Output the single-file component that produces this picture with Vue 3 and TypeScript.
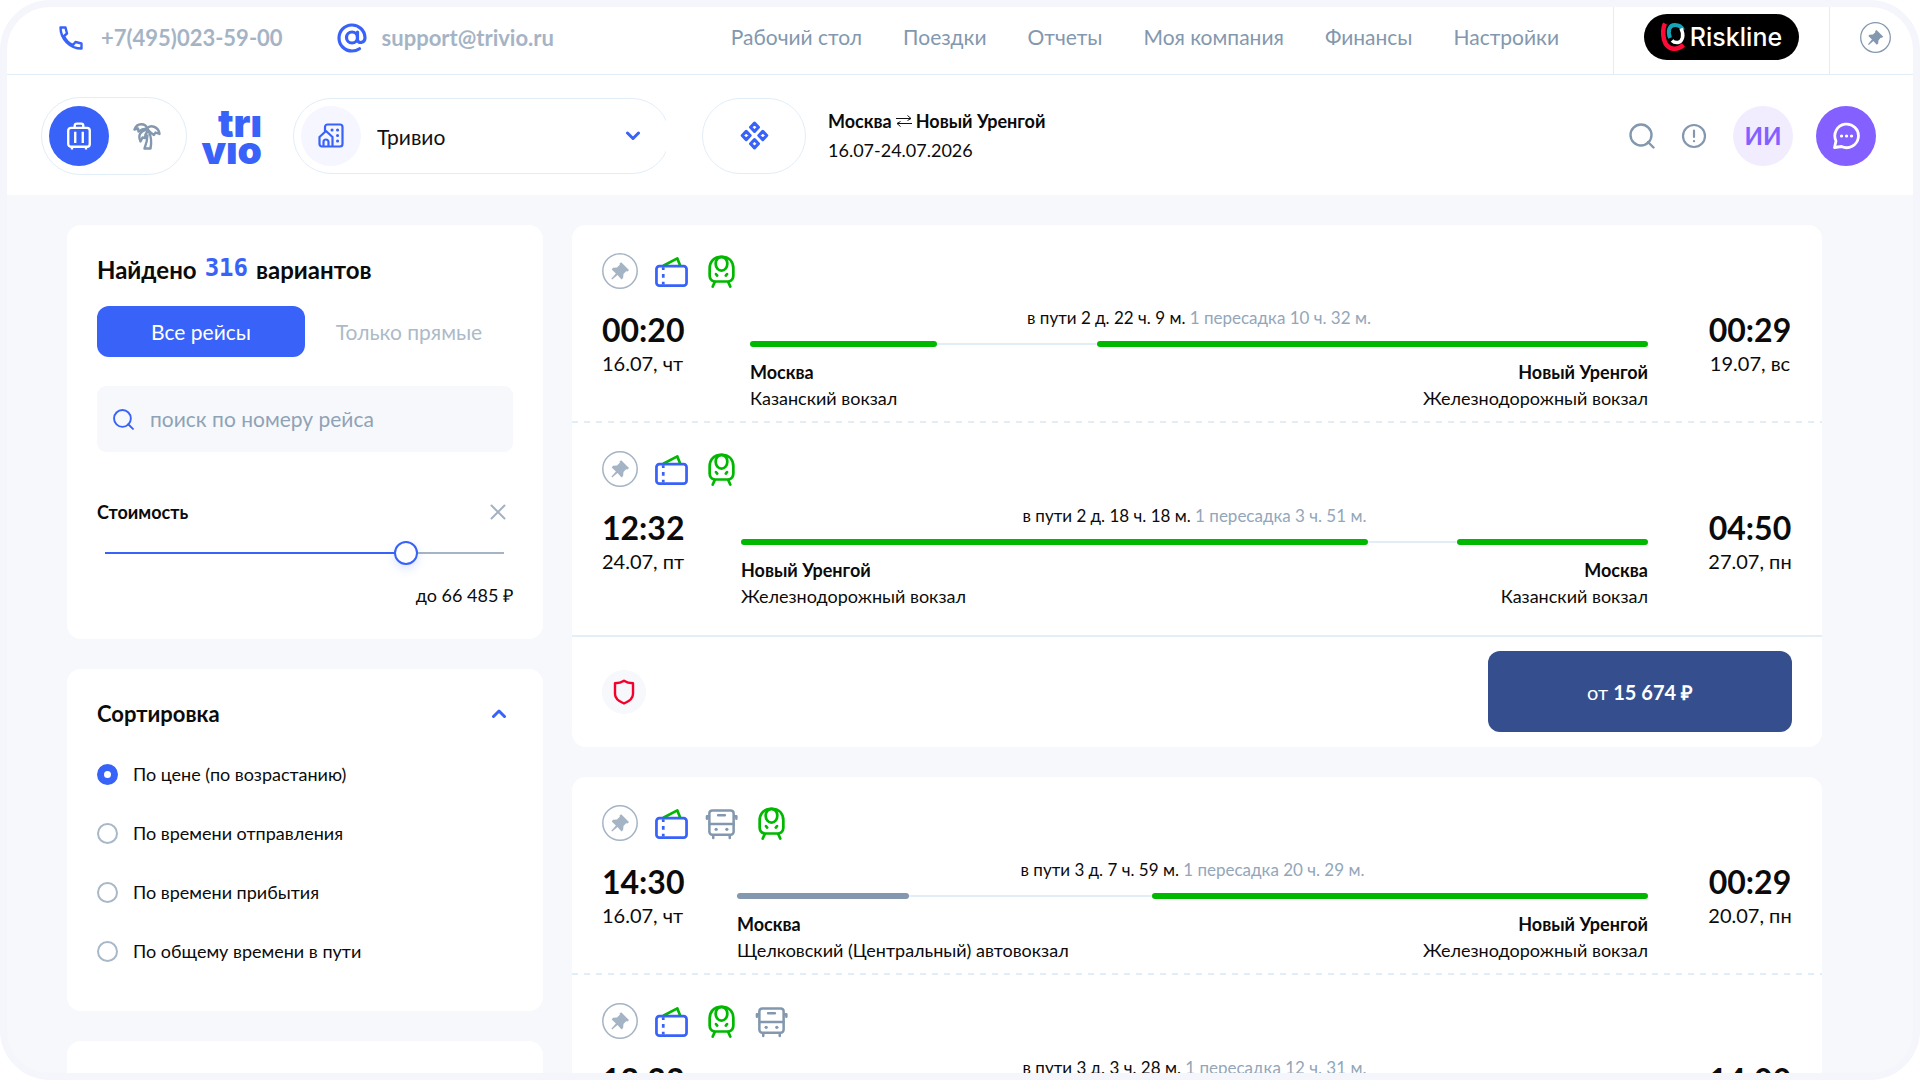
<script setup lang="ts">
import { computed, ref } from 'vue'

type Transport = 'train' | 'bus'

interface Segment {
  kind: Transport | 'wait'
  share: number
}

interface Point {
  time: string
  date: string
  city: string
  station: string
}

interface Leg {
  transports: Transport[]
  startWidth: number
  from: Point
  to: Point
  duration: string
  transfer: string
  segments: Segment[]
}

interface Trip {
  id: number
  legs: Leg[]
  price: string
}

const navItems = ['Рабочий стол', 'Поездки', 'Отчеты', 'Моя компания', 'Финансы', 'Настройки']

const sortOptions = [
  { id: 'price', label: 'По цене (по возрастанию)' },
  { id: 'departure', label: 'По времени отправления' },
  { id: 'arrival', label: 'По времени прибытия' },
  { id: 'total', label: 'По общему времени в пути' },
]
const sortBy = ref('price')

const company = ref('Тривио')
const flightNumber = ref('')
const directOnly = ref(false)

const minPrice = 15674
const maxPrice = 81663
const price = ref(66485)
const priceFill = computed(() => {
  const ratio = (price.value - minPrice) / (maxPrice - minPrice)
  return `${Math.round(3 + ratio * 94)}%`
})
const priceLabel = computed(() => String(price.value).replace(/\B(?=(\d{3})+$)/g, '\u00a0'))

const trips: Trip[] = [
  {
    id: 1,
    price: '15 674 ₽',
    legs: [
      {
        transports: ['train'],
        startWidth: 88,
        from: { time: '00:20', date: '16.07, чт', city: 'Москва', station: 'Казанский вокзал' },
        to: { time: '00:29', date: '19.07, вс', city: 'Новый Уренгой', station: 'Железнодорожный вокзал' },
        duration: 'в пути 2 д. 22 ч. 9 м.',
        transfer: '1 пересадка 10 ч. 32 м.',
        segments: [
          { kind: 'train', share: 187 },
          { kind: 'wait', share: 160 },
          { kind: 'train', share: 551 },
        ],
      },
      {
        transports: ['train'],
        startWidth: 79,
        from: { time: '12:32', date: '24.07, пт', city: 'Новый Уренгой', station: 'Железнодорожный вокзал' },
        to: { time: '04:50', date: '27.07, пн', city: 'Москва', station: 'Казанский вокзал' },
        duration: 'в пути 2 д. 18 ч. 18 м.',
        transfer: '1 пересадка 3 ч. 51 м.',
        segments: [
          { kind: 'train', share: 626 },
          { kind: 'wait', share: 89 },
          { kind: 'train', share: 191 },
        ],
      },
    ],
  },
  {
    id: 2,
    price: '15 698 ₽',
    legs: [
      {
        transports: ['bus', 'train'],
        startWidth: 75,
        from: { time: '14:30', date: '16.07, чт', city: 'Москва', station: 'Щелковский (Центральный) автовокзал' },
        to: { time: '00:29', date: '20.07, пн', city: 'Новый Уренгой', station: 'Железнодорожный вокзал' },
        duration: 'в пути 3 д. 7 ч. 59 м.',
        transfer: '1 пересадка 20 ч. 29 м.',
        segments: [
          { kind: 'bus', share: 172 },
          { kind: 'wait', share: 243 },
          { kind: 'train', share: 496 },
        ],
      },
      {
        transports: ['train', 'bus'],
        startWidth: 79,
        from: { time: '12:32', date: '24.07, пт', city: 'Новый Уренгой', station: 'Железнодорожный вокзал' },
        to: { time: '14:00', date: '27.07, пн', city: 'Москва', station: 'Щелковский (Центральный) автовокзал' },
        duration: 'в пути 3 д. 3 ч. 28 м.',
        transfer: '1 пересадка 12 ч. 31 м.',
        segments: [
          { kind: 'train', share: 560 },
          { kind: 'wait', share: 180 },
          { kind: 'bus', share: 166 },
        ],
      },
    ],
  },
]
</script>

<template>
  <svg class="sprite" aria-hidden="true">
    <symbol id="pin" viewBox="0 0 36 36">
      <circle cx="18" cy="18" r="17.2" fill="none" stroke="currentColor" stroke-width="1.5" />
      <path
        fill="currentColor"
        d="M19.2 9.3 27 17.1l-1.5 1.3-1.4-.2-2.6 2.9-.4 4-1.6 1.3-4-4.3-5.3 4.5-.9-.9 4.6-5.3-4.2-4 1.3-1.6 4-.4 2.8-2.6-.2-1.3z"
      />
    </symbol>
    <symbol id="ticket" viewBox="0 0 34 34">
      <path d="M8.5 11 23 3.500 26 11" fill="none" stroke="#00b800" stroke-width="2.800" stroke-linejoin="round" />
      <rect x="1.500" y="11.500" width="31" height="20" rx="3" fill="none" stroke="#3862f8" stroke-width="2.800" />
      <path d="M8.500 12.500v3M8.500 19.500v4M8.500 27.500v3" stroke="#3862f8" stroke-width="2.800" />
    </symbol>
    <symbol id="train" viewBox="0 0 34 34">
      <g fill="none" stroke="#00b800" stroke-width="2.800" stroke-linecap="round" stroke-linejoin="round">
        <path d="M10 27.300C6.500 26.600 4.800 24 4.800 21V14C4.800 6.500 9.500 2 17 2S29.200 6.500 29.200 14v7c0 3-1.700 5.600-5.200 6.300z" />
        <ellipse cx="17" cy="9" rx="6" ry="7" />
        <path d="M11.300 19.700l1.300 1.500M22.700 19.700l-1.300 1.500" />
        <path d="M10 28 8 32.500M24 28l2 4.500" />
      </g>
    </symbol>
    <symbol id="bus" viewBox="0 0 34 34">
      <g fill="none" stroke="#8398ae" stroke-width="2.600" stroke-linecap="round" stroke-linejoin="round">
        <rect x="4.500" y="3.500" width="25" height="25" rx="3" />
        <path d="M5 17.500h24.500M13.500 8.500h7M4 9.500H2v2.500M30.500 9.500h1.800v2.500M8.500 29v3M25.500 29v3" />
      </g>
      <circle cx="11.500" cy="23" r="1.700" fill="#8398ae" />
      <circle cx="22.500" cy="23" r="1.700" fill="#8398ae" />
    </symbol>
  </svg>

  <div class="frame">
    <header class="header">
      <div class="topbar">
        <div class="contacts">
          <a class="contact" href="tel:+74950235900">
            <svg class="contact-icon" viewBox="0 0 24 24" fill="none" stroke="#3862f8" stroke-width="2.400" stroke-linejoin="round">
              <path d="M1.500 1.500H6.500L8 7.500 5 10C6.600 14 10 17.400 14 19L16.500 16 22.500 17.500V22.500C11 22.500 1.500 13 1.500 1.500z" />
            </svg>
            +7(495)023-59-00
          </a>
          <a class="contact contact-mail" href="mailto:support@trivio.ru">
            <svg class="mail-icon" viewBox="0 0 30 30" fill="none" stroke="#3862f8" stroke-width="3.200" stroke-linecap="round">
              <circle cx="15" cy="14.500" r="5.500" />
              <path d="M20.500 9v7.500c0 4.500 7.500 4 7.500-2A13 13 0 1 0 15 28c3 0 5.300-.8 7.500-2.300" />
            </svg>
            support@trivio.ru
          </a>
        </div>
        <nav class="nav">
          <a v-for="item in navItems" :key="item" href="#">{{ item }}</a>
        </nav>
        <div class="risk">
          <a class="riskline" href="#">
            <svg class="risk-icon" viewBox="0 0 26 30" fill="none">
              <path d="M4 1.500C1.500 6 1.500 16 4.500 21.500c4 6.500 11.500 7 18 1.500" stroke="#ff0a37" stroke-width="4.500" />
              <path d="M9 16C6.500 9 8 3 14 3c4 0 6.500 1.500 8 5" stroke="#16a5b8" stroke-width="4" />
              <path d="M20 6.500C23.500 13 21.500 19.500 17 20.500c-2.500.4-4.500-.4-6-2" stroke="#fff" stroke-width="3.500" />
            </svg>
            Riskline
          </a>
        </div>
        <button class="pin-button" type="button" aria-label="Закрепить">
          <svg><use href="#pin" /></svg>
        </button>
      </div>

      <div class="mainbar">
        <div class="mode">
          <button class="mode-button active" type="button" aria-label="Командировки">
            <svg viewBox="0 0 26 26" fill="none" stroke="#fff" stroke-width="2.200" stroke-linejoin="round">
              <rect x="3" y="5.500" width="20" height="17.500" rx="2.500" />
              <path d="M9 5V3.500c0-1.200.8-2 2-2h4c1.200 0 2 .8 2 2V5M9.500 9v10.500M16.500 9v10.500M6.500 23v2.500M19.500 23v2.500" />
            </svg>
          </button>
          <button class="mode-button" type="button" aria-label="Отпуск">
            <svg viewBox="0 0 28 28" fill="none" stroke="#8398ae" stroke-width="2.400" stroke-linejoin="round">
              <path d="M14 6.500C12.500 1 4 .5 1.500 7.500L5 6.500l.5 3L9 7.500 14 6.500C17 2.500 25.500 4 26.500 12l-4-1.500L21 13l-3.500-2.500L14 6.500z" />
              <path d="M13.500 7.500C7.500 9 4.500 13 7.500 19.500l2-4 2.500.5.500-3.500 2.500-4M16 10c2.500 5 2.500 11 1.500 16.500h-6c2-5 3-9 3-14" />
            </svg>
          </button>
        </div>

        <a class="logo" href="#" aria-label="trivio">trı<br />vıo</a>

        <div class="company-clip">
          <label class="company">
            <span class="company-icon">
              <svg viewBox="0 0 26 26" fill="none" stroke="#3862f8" stroke-width="2.200" stroke-linejoin="round" stroke-linecap="round">
                <path d="M7 9V4c0-1.500 1-2.500 2.500-2.500H22c1.500 0 2.500 1 2.500 2.500v17c0 1.500-1 2.500-2.500 2.500H4c-1.500 0-2.500-1-2.500-2.500v-7L8 8l6.500 6v9.500M5.500 23v-4a2.500 2.500 0 0 1 5 0v4" />
                <path d="M14 7h.1M19.500 7h.1M19.500 12.500h.1M19.500 18h.1" stroke-width="3" />
              </svg>
            </span>
            <select v-model="company" aria-label="Компания">
              <option>Тривио</option>
            </select>
            <svg class="company-arrow" viewBox="0 0 16 10" fill="none" stroke="#3862f8" stroke-width="3" stroke-linecap="round" stroke-linejoin="round">
              <path d="M2.500 2 8 7.500 13.500 2" />
            </svg>
          </label>
        </div>

        <button class="services" type="button" aria-label="Сервисы">
          <svg viewBox="0 0 28 28" fill="none" stroke="#3862f8" stroke-width="3" stroke-linejoin="round">
            <path d="M14 2 17.800 6 14 10 10.200 6zM14 18l3.800 4-3.800 4-3.800-4zM6 10l3.800 4L6 18l-3.800-4zM22 10l3.800 4-3.800 4-3.800-4z" />
          </svg>
        </button>

        <div class="route">
          <strong>
            Москва
            <svg viewBox="0 0 16 12" fill="none" stroke="#111" stroke-width="1">
              <path d="M0 3.500h15M11.500.5l3.500 3-3.500 2M16 8.500H1M4.500 11.500 1 8.500l3.500-2" />
            </svg>
            Новый Уренгой
          </strong>
          <span>16.07-24.07.2026</span>
        </div>

        <div class="tools">
          <button class="tool" type="button" aria-label="Поиск">
            <svg viewBox="0 0 26 26" fill="none" stroke="#8398ae" stroke-width="2.400" stroke-linecap="round">
              <circle cx="12" cy="12" r="10.500" />
              <path d="M19 19l5.500 5.500" />
            </svg>
          </button>
          <button class="tool" type="button" aria-label="Информация">
            <svg viewBox="0 0 26 26" fill="none" stroke="#8398ae" stroke-width="2.200" stroke-linecap="round">
              <circle cx="13" cy="13" r="11" />
              <path d="M13 7.500v6.500M13 18v.2" />
            </svg>
          </button>
          <button class="round avatar" type="button">ИИ</button>
          <button class="round chat" type="button" aria-label="Чат">
            <svg viewBox="0 0 28 28" fill="none" stroke="#fff" stroke-width="2.800" stroke-linejoin="round" stroke-linecap="round">
              <path d="M2.500 25.500 4 19A11.800 11.800 0 1 1 9.500 24.500z" />
              <path d="M9.500 14h.1M14.500 14h.1M19.500 14h.1" stroke-width="3.200" />
            </svg>
          </button>
        </div>
      </div>
    </header>

    <div class="content">
      <aside class="sidebar">
        <section class="panel">
          <h2 class="found">Найдено <span>316</span> вариантов</h2>
          <div class="tabs">
            <button type="button" :class="{ active: !directOnly }" @click="directOnly = false">Все рейсы</button>
            <button type="button" :class="{ active: directOnly }" @click="directOnly = true">Только прямые</button>
          </div>
          <label class="search">
            <svg viewBox="0 0 20 20" fill="none" stroke="#3862f8" stroke-width="1.800" stroke-linecap="round">
              <circle cx="9" cy="9" r="8" />
              <path d="M14.500 14.500 19 19" />
            </svg>
            <input v-model="flightNumber" type="text" placeholder="поиск по номеру рейса" aria-label="поиск по номеру рейса" />
          </label>
          <div class="cost-head">
            <label for="price">Стоимость</label>
            <button type="button" aria-label="Сбросить">
              <svg viewBox="0 0 16 16" stroke="#a3b2c2" stroke-width="2" stroke-linecap="round">
                <path d="M1.500 1.500l13 13M14.500 1.500l-13 13" />
              </svg>
            </button>
          </div>
          <input
            id="price"
            v-model.number="price"
            class="range"
            type="range"
            :min="minPrice"
            :max="maxPrice"
            :style="{ '--fill': priceFill }"
          />
          <p class="cost-value">до {{ priceLabel }} ₽</p>
        </section>

        <section class="panel sort">
          <button class="sort-head" type="button">
            Сортировка
            <svg viewBox="0 0 16 10" fill="none" stroke="#3862f8" stroke-width="3" stroke-linecap="round" stroke-linejoin="round">
              <path d="M2.500 7.500 8 2l5.500 5.500" />
            </svg>
          </button>
          <label v-for="option in sortOptions" :key="option.id" class="option">
            <input v-model="sortBy" type="radio" name="sort" :value="option.id" />
            {{ option.label }}
          </label>
        </section>

        <section class="panel stub"></section>
      </aside>

      <main class="results">
        <article v-for="trip in trips" :key="trip.id" class="trip">
          <section v-for="(leg, legIndex) in trip.legs" :key="legIndex" class="leg">
            <div class="icons">
              <button class="leg-pin" type="button" aria-label="Закрепить">
                <svg><use href="#pin" /></svg>
              </button>
              <svg class="kind"><use href="#ticket" /></svg>
              <svg v-for="kind in leg.transports" :key="kind" class="kind"><use :href="'#' + kind" /></svg>
            </div>
            <div class="leg-body">
              <div class="moment" :style="{ width: leg.startWidth + 'px' }">
                <b>{{ leg.from.time }}</b>
                <span>{{ leg.from.date }}</span>
              </div>
              <div class="track">
                <p class="duration">{{ leg.duration }} <span>{{ leg.transfer }}</span></p>
                <div class="line">
                  <i
                    v-for="(segment, segmentIndex) in leg.segments"
                    :key="segmentIndex"
                    :class="segment.kind"
                    :style="{ flexGrow: segment.share }"
                  ></i>
                </div>
                <div class="stations">
                  <div>
                    <b>{{ leg.from.city }}</b>
                    <span>{{ leg.from.station }}</span>
                  </div>
                  <div class="arrival">
                    <b>{{ leg.to.city }}</b>
                    <span>{{ leg.to.station }}</span>
                  </div>
                </div>
              </div>
              <div class="moment end">
                <b>{{ leg.to.time }}</b>
                <span>{{ leg.to.date }}</span>
              </div>
            </div>
          </section>
          <footer class="trip-footer">
            <span class="policy">
              <svg viewBox="0 0 22 26" fill="none" stroke="#f5002d" stroke-width="2.400" stroke-linejoin="round">
                <path d="M11 1.800C8.500 3.500 5.500 4.200 2 4.300V15c0 4.500 4 7.500 9 9.500 5-2 9-5 9-9.500V4.300C16.500 4.200 13.500 3.500 11 1.800z" />
              </svg>
            </span>
            <button class="buy" type="button">от <b>{{ trip.price }}</b></button>
          </footer>
        </article>
      </main>
    </div>
  </div>
</template>

<style>
body {
  margin: 0;
  background: #fff;
}
</style>

<style scoped>
* {
  box-sizing: border-box;
}

.sprite {
  position: absolute;
  width: 0;
  height: 0;
}

.frame {
  height: 100vh;
  overflow: hidden;
  border: 7px solid #f5f6fb;
  border-radius: 50px;
  background: #f7f8fc;
  color: #0b0b0b;
  font: 18px/24px Lato, 'Open Sans', sans-serif;
}

button {
  padding: 0;
  border: 0;
  background: none;
  color: inherit;
  font: inherit;
  cursor: pointer;
}

a {
  color: inherit;
  text-decoration: none;
}

p,
h2 {
  margin: 0;
}

svg {
  display: block;
}

/* Header */
.header {
  background: #fff;
}

.topbar {
  display: flex;
  align-items: stretch;
  height: 68px;
  border-bottom: 1px solid #e1edf7;
}

.contacts,
.contact,
.nav,
.risk,
.pin-button {
  display: flex;
  align-items: center;
}

.contacts {
  flex: 1;
  padding: 0 0 6px 52px;
  color: #a5b4c5;
  font-size: 22px;
  font-weight: 700;
}

.contact {
  gap: 18px;
}

.contact-mail {
  gap: 15px;
  margin-left: 54px;
}

.contact-icon {
  width: 24px;
  height: 24px;
}

.mail-icon {
  width: 30px;
  height: 30px;
}

.nav {
  gap: 41px;
  padding: 0 54px 7px 0;
  color: #8398ae;
  font-size: 21px;
}

.risk {
  padding: 0 30px 8px;
  border: 1px solid #e1edf7;
  border-width: 0 1px;
}

.riskline {
  display: flex;
  align-items: center;
  justify-content: center;
  gap: 3px;
  width: 155px;
  height: 46px;
  border-radius: 23px;
  background: #000;
  color: #fff;
  font: 500 25px/30px Inter, sans-serif;
}

.risk-icon {
  width: 26px;
  height: 30px;
}

.pin-button {
  padding: 0 22px 6px 30px;
  color: #8398ae;
}

.pin-button svg {
  width: 31px;
  height: 31px;
}

.mainbar {
  display: flex;
  align-items: center;
  height: 120px;
  padding: 1px 37px 0 34px;
}

.mode {
  display: flex;
  width: 146px;
  height: 78px;
  padding: 8px 7px;
  border: 1px solid #e1edf7;
  border-radius: 39px;
}

.mode-button {
  display: grid;
  place-items: center;
  width: 60px;
  height: 60px;
  border-radius: 50%;
}

.mode-button + .mode-button {
  margin-left: 8px;
}

.mode-button.active {
  background: #3862f8;
}

.mode-button svg {
  width: 28px;
  height: 28px;
}

.logo {
  width: 75px;
  margin-right: 31px;
  color: #3862f8;
  font: 900 39px/27px Inter, sans-serif;
  text-align: right;
}

.company-clip {
  width: 373px;
  overflow: hidden;
}

.company {
  display: flex;
  align-items: center;
  width: 377px;
  height: 76px;
  padding: 0 28px 0 7px;
  border: 1px solid #e1edf7;
  border-radius: 38px;
}

.company-icon {
  display: grid;
  place-items: center;
  width: 60px;
  height: 60px;
  border-radius: 50%;
  background: #f5f6ff;
}

.company-icon svg {
  width: 26px;
  height: 26px;
}

.company select {
  flex: 1;
  padding: 2px 0 0 16px;
  border: 0;
  background: none;
  color: #111;
  font: 21px/28px Lato, sans-serif;
  appearance: none;
}

.company-arrow {
  width: 16px;
  height: 10px;
}

.services {
  display: grid;
  place-items: center;
  width: 104px;
  height: 76px;
  margin-left: 36px;
  border: 1px solid #e1edf7;
  border-radius: 38px;
}

.services svg {
  width: 29px;
  height: 29px;
}

.route {
  display: flex;
  flex: 1;
  flex-direction: column;
  gap: 5px;
  margin-left: 22px;
}

.route strong {
  display: flex;
  align-items: center;
  gap: 4px;
}

.route svg {
  width: 16px;
  height: 12px;
}

.tools {
  display: flex;
  align-items: center;
}

.tool {
  width: 26px;
  height: 26px;
  margin-right: 26px;
}

.round {
  display: grid;
  place-items: center;
  width: 60px;
  height: 60px;
  border-radius: 50%;
}

.avatar {
  background: #f1edff;
  color: #8360ff;
  font-size: 24px;
  font-weight: 700;
}

.chat {
  margin-left: 23px;
  background: #8360ff;
}

.chat svg {
  width: 28px;
  height: 28px;
}

/* Filters */
.content {
  display: flex;
  align-items: flex-start;
  gap: 29px;
  padding: 30px 91px 0 60px;
}

.sidebar {
  display: flex;
  flex: none;
  flex-direction: column;
  gap: 30px;
  width: 476px;
}

.panel {
  padding: 30px 30px 32px;
  border-radius: 14px;
  background: #fff;
}

.found {
  display: flex;
  gap: 8px;
  height: 30px;
  font-size: 24px;
  font-weight: 700;
  line-height: 30px;
}

.found span {
  color: #3862f8;
  font-family: 'DejaVu Sans Mono', monospace;
  font-size: 24px;
  line-height: 26px;
}

.tabs {
  display: flex;
  margin-top: 21px;
}

.tabs button {
  flex: 1;
  height: 51px;
  border-radius: 12px;
  color: #adbac8;
  font-size: 21px;
}

.tabs .active {
  background: #3862f8;
  color: #fff;
}

.search {
  display: flex;
  align-items: center;
  gap: 16px;
  height: 66px;
  margin-top: 29px;
  padding: 0 16px;
  border-radius: 9px;
  background: #f7f8fc;
}

.search svg {
  width: 21px;
  height: 21px;
}

.search input {
  flex: 1;
  min-width: 0;
  padding: 0;
  border: 0;
  outline: 0;
  background: none;
  font: 21px/26px Lato, sans-serif;
}

.search input::placeholder {
  color: #8fa3b6;
}

.cost-head {
  display: flex;
  align-items: center;
  justify-content: space-between;
  margin-top: 48px;
  padding-right: 7px;
  font-weight: 700;
}

.cost-head svg {
  width: 16px;
  height: 16px;
}

.range {
  display: block;
  width: 399px;
  height: 24px;
  margin: 17px 9px 0 8px;
  background: linear-gradient(to right, #3862f8 var(--fill), #a5b4c5 var(--fill)) center / 100% 2px no-repeat;
  appearance: none;
}

.range::-webkit-slider-thumb {
  width: 24px;
  height: 24px;
  border: 2px solid #3862f8;
  border-radius: 50%;
  background: #fff;
  box-shadow: 0 4px 10px rgba(56, 98, 248, 0.16);
  appearance: none;
}

.cost-value {
  margin-top: 18px;
  text-align: right;
}

.sort {
  display: flex;
  flex-direction: column;
  gap: 35px;
  padding-bottom: 48px;
}

.sort-head {
  display: flex;
  align-items: center;
  justify-content: space-between;
  margin-bottom: -2px;
  padding-right: 6px;
  font-size: 22px;
  font-weight: 700;
  line-height: 30px;
}

.sort-head svg {
  width: 16px;
  height: 10px;
}

.option {
  display: flex;
  align-items: center;
  gap: 15px;
}

.option input {
  width: 21px;
  height: 21px;
  margin: 0;
  border: 2px solid #a9b8c8;
  border-radius: 50%;
  background: #fff;
  appearance: none;
}

.option input:checked {
  border: 7px solid #3862f8;
}

.stub {
  height: 240px;
}

/* Results */
.results {
  display: flex;
  flex: 1;
  flex-direction: column;
  gap: 30px;
}

.trip {
  border-radius: 14px;
  background: #fff;
}

.leg {
  padding: 28px 30px 10px;
}

.leg:first-child::after {
  content: '';
  display: block;
  height: 2px;
  margin: 10px -30px -10px;
  background: repeating-linear-gradient(to right, #e1edf7 0 6px, transparent 6px 12px);
}

.leg:nth-child(2) {
  padding-bottom: 26px;
}

.icons {
  display: flex;
  align-items: center;
  gap: 17px;
  height: 36px;
  margin-bottom: 19px;
}

.leg-pin {
  color: #a5b4c5;
}

.leg-pin svg {
  width: 36px;
  height: 36px;
}

.kind {
  width: 33px;
  height: 33px;
}

.leg-body {
  display: flex;
  gap: 60px;
}

.moment {
  display: flex;
  flex: none;
  flex-direction: column;
  padding-top: 5px;
  font-size: 20px;
  line-height: 32px;
  white-space: nowrap;
}

.moment b {
  font-size: 32px;
  line-height: 34px;
}

.end {
  align-items: center;
  width: 84px;
}

.track {
  flex: 1;
}

.duration {
  font-size: 17px;
  line-height: 20px;
  text-align: center;
}

.duration span {
  color: #93a6b9;
}

.line {
  display: flex;
  align-items: center;
  height: 6px;
  margin: 13px 0 12px;
}

.line i {
  flex: 0 0 0;
  height: 6px;
  border-radius: 3px;
}

.line .train {
  background: #00b800;
}

.line .bus {
  background: #8398ae;
}

.line .wait {
  height: 2px;
  background: #e1edf7;
}

.stations {
  display: flex;
  justify-content: space-between;
  line-height: 26px;
}

.stations div {
  display: flex;
  flex-direction: column;
}

.stations .arrival {
  align-items: flex-end;
}

.trip-footer {
  display: flex;
  align-items: center;
  justify-content: space-between;
  padding: 14px 30px 15px;
  border-top: 2px solid #e4eef7;
}

.policy {
  display: grid;
  place-items: center;
  width: 44px;
  height: 44px;
  border-radius: 50%;
  background: #f7f8fc;
}

.policy svg {
  width: 22px;
  height: 26px;
}

.buy {
  width: 304px;
  height: 81px;
  border-radius: 12px;
  background: #354f8e;
  color: #fff;
  font-size: 20px;
}
</style>
